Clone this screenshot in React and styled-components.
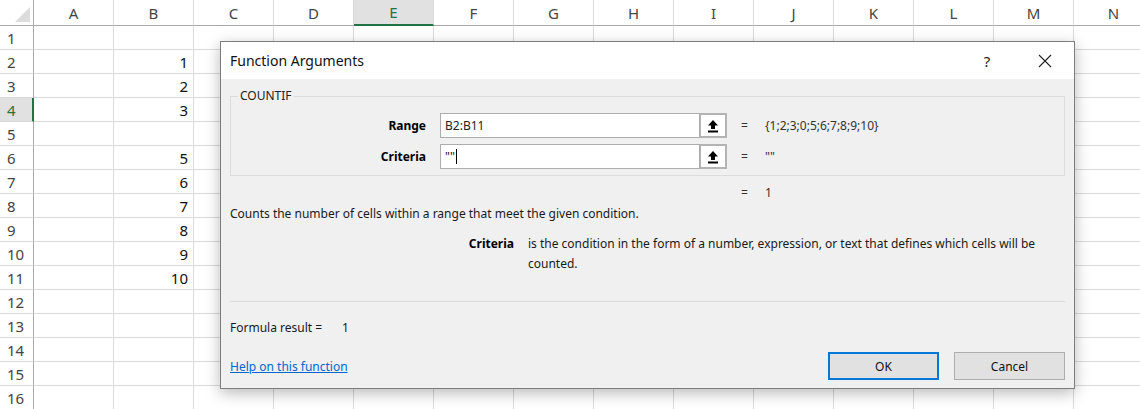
import React from 'react';
import styled, { createGlobalStyle, css } from 'styled-components';

const GlobalStyle = createGlobalStyle`
  html, body {
    margin: 0;
    padding: 0;
    background: #fff;
    overflow: hidden;
  }
  body {
    font-family: "Noto Sans", "Open Sans", sans-serif;
  }
`;

const Page = styled.div`
  position: relative;
  width: 1140px;
  height: 409px;
  overflow: hidden;
`;

const Sheet = styled.div`
  display: grid;
  grid-template-columns: 34px repeat(14, 80px);
  grid-template-rows: 26px repeat(16, 24px);
  font-family: "Noto Sans", "Open Sans", sans-serif;
  font-size: 15px;
`;

const Corner = styled.div`
  background: #fff;
  border-right: 1px solid #a9a9a9;
  border-bottom: 1px solid #a9a9a9;
  display: flex;
  align-items: flex-end;
  justify-content: flex-end;
  padding: 0 3px 3px 0;
`;

const ColHead = styled.div`
  box-sizing: border-box;
  background: #fff;
  color: #444;
  border-right: 1px solid #dadada;
  border-bottom: 1px solid #a9a9a9;
  display: flex;
  align-items: center;
  justify-content: center;
  ${props =>
    props.$selected &&
    css`
      background: #e1e1e1;
      color: #217346;
      border-bottom: 2px solid #217346;
    `}
`;

const RowHead = styled.div`
  box-sizing: border-box;
  background: #fff;
  color: #444;
  border-right: 1px solid #a9a9a9;
  border-bottom: 1px solid #dadada;
  display: flex;
  align-items: center;
  padding-left: 7px;
  ${props =>
    props.$selected &&
    css`
      background: #e1e1e1;
      color: #217346;
      border-right: 2px solid #217346;
    `}
`;

const Cell = styled.div`
  box-sizing: border-box;
  border-right: 1px solid #dadada;
  border-bottom: 1px solid #dadada;
  display: flex;
  align-items: center;
  justify-content: flex-end;
  padding-right: 5px;
  color: #111;
`;

const Dialog = styled.div`
  position: absolute;
  left: 220px;
  top: 41px;
  width: 855px;
  height: 348px;
  box-sizing: border-box;
  border: 1px solid #7d7d7d;
  background: #f0f0f0;
  box-shadow: 0 4px 14px rgba(0, 0, 0, 0.28);
  display: flex;
  flex-direction: column;
  font-family: "Noto Sans", "Open Sans", sans-serif;
  font-size: 12px;
  color: #000;
`;

const TitleBar = styled.div`
  height: 37px;
  background: #fff;
  display: flex;
  align-items: center;
  padding-left: 9px;
  font-size: 14px;
  color: #111;
`;

const TitleText = styled.div`
  flex: 1;
`;

const TitleButton = styled.div`
  width: 58px;
  display: flex;
  justify-content: center;
  align-items: center;
  font-size: 15px;
  color: #222;
`;

const Body = styled.div`
  padding: 0 9px;
  display: flex;
  flex-direction: column;
`;

const Group = styled.fieldset`
  margin: 9px 0 0;
  padding: 0 0 6px;
  border: 1px solid #dcdcdc;
  min-width: 0;
`;

const Legend = styled.legend`
  margin-left: 7px;
  padding: 0 2px;
  line-height: 16px;
  font-size: 12px;
  color: #222;
`;

const ArgRows = styled.div`
  padding-top: 9px;
  display: flex;
  flex-direction: column;
  gap: 6px;
`;

const ArgRow = styled.div`
  display: flex;
  align-items: center;
  height: 25px;
`;

const ArgLabel = styled.div`
  width: 195px;
  text-align: right;
  font-weight: bold;
  margin-right: 14px;
`;

const InputBox = styled.div`
  width: 260px;
  height: 25px;
  box-sizing: border-box;
  background: #fff;
  border: 1px solid #adadad;
  display: flex;
  align-items: center;
  padding-left: 4px;
  color: #222;
`;

const Caret = styled.span`
  display: inline-block;
  width: 1px;
  height: 15px;
  background: #000;
  margin-left: 1px;
`;

const PickButton = styled.div`
  width: 27px;
  height: 25px;
  box-sizing: border-box;
  border: 2px solid #b4b4b4;
  border-left-width: 1px;
  background: #fff;
  display: flex;
  align-items: center;
  justify-content: center;
`;

const Eq = styled.span`
  width: 24px;
  margin-left: ${props => (props.$flush ? '0' : '14px')};
  color: #333;
`;

const Value = styled.span`
  color: #333;
`;

const ResultLine = styled.div`
  margin-top: 9px;
  line-height: 16px;
  display: flex;
  padding-left: 511px;
`;

const Description = styled.div`
  margin-top: 5px;
  line-height: 16px;
  color: #1a1a1a;
`;

const ArgHelp = styled.div`
  margin-top: 12px;
  display: flex;
  line-height: 20px;
`;

const HelpLabel = styled.div`
  width: 284px;
  text-align: right;
  font-weight: bold;
  margin-right: 14px;
  flex-shrink: 0;
`;

const HelpText = styled.div`
  width: 537px;
  color: #1a1a1a;
`;

const Separator = styled.div`
  margin-top: 27px;
  height: 1px;
  background: #dcdcdc;
`;

const FormulaResult = styled.div`
  margin-top: 18px;
  line-height: 16px;
  color: #1a1a1a;
  display: flex;
  gap: 20px;
`;

const Footer = styled.div`
  margin-top: 16px;
  display: flex;
  align-items: center;
`;

const HelpLink = styled.a`
  flex: 1;
  color: #0066cc;
  text-decoration: underline;
  cursor: pointer;
`;

const Button = styled.button`
  width: 111px;
  height: 28px;
  box-sizing: border-box;
  margin-left: 15px;
  background: #e1e1e1;
  border: 1px solid #adadad;
  font-family: inherit;
  font-size: 12px;
  color: #111;
  ${props =>
    props.$default &&
    css`
      margin-left: 0;
      border: 2px solid #0078d7;
    `}
`;

const UploadIcon = () => (
  <svg width="12" height="14" viewBox="0 0 12 14">
    <path d="M6 1 L11 6.5 H8 V10 H4 V6.5 H1 Z" fill="#000" />
    <rect x="1" y="11.5" width="10" height="2" fill="#000" />
  </svg>
);

const CloseIcon = () => (
  <svg width="14" height="14" viewBox="0 0 14 14">
    <path d="M1 1 L13 13 M13 1 L1 13" stroke="#222" strokeWidth="1.1" />
  </svg>
);

const CornerTriangle = () => (
  <svg width="15" height="15" viewBox="0 0 15 15">
    <path d="M15 0 V15 H0 Z" fill="#dcdcdc" />
  </svg>
);

const columns = 'ABCDEFGHIJKLMN'.split('');
const values = { 2: 1, 3: 2, 4: 3, 6: 5, 7: 6, 8: 7, 9: 8, 10: 9, 11: 10 };
const rows = Array.from({ length: 16 }, (_, i) => i + 1);

const App = () => {
  return (
    <Page>
      <GlobalStyle />
      <Sheet>
        <Corner>
          <CornerTriangle />
        </Corner>
        {columns.map(c => (
          <ColHead key={c} $selected={c === 'E'}>
            {c}
          </ColHead>
        ))}
        {rows.map(r => (
          <React.Fragment key={r}>
            <RowHead $selected={r === 4}>{r}</RowHead>
            {columns.map(c => (
              <Cell key={c}>{c === 'B' ? values[r] : null}</Cell>
            ))}
          </React.Fragment>
        ))}
      </Sheet>

      <Dialog>
        <TitleBar>
          <TitleText>Function Arguments</TitleText>
          <TitleButton>?</TitleButton>
          <TitleButton>
            <CloseIcon />
          </TitleButton>
        </TitleBar>
        <Body>
          <Group>
            <Legend>COUNTIF</Legend>
            <ArgRows>
              <ArgRow>
                <ArgLabel>Range</ArgLabel>
                <InputBox>B2:B11</InputBox>
                <PickButton>
                  <UploadIcon />
                </PickButton>
                <Eq>=</Eq>
                <Value>{'{1;2;3;0;5;6;7;8;9;10}'}</Value>
              </ArgRow>
              <ArgRow>
                <ArgLabel>Criteria</ArgLabel>
                <InputBox>
                  ""
                  <Caret />
                </InputBox>
                <PickButton>
                  <UploadIcon />
                </PickButton>
                <Eq>=</Eq>
                <Value>""</Value>
              </ArgRow>
            </ArgRows>
          </Group>
          <ResultLine>
            <Eq $flush>=</Eq>
            <Value>1</Value>
          </ResultLine>
          <Description>
            Counts the number of cells within a range that meet the given condition.
          </Description>
          <ArgHelp>
            <HelpLabel>Criteria</HelpLabel>
            <HelpText>
              is the condition in the form of a number, expression, or text that defines which cells will be counted.
            </HelpText>
          </ArgHelp>
          <Separator />
          <FormulaResult>
            <span>Formula result =</span>
            <span>1</span>
          </FormulaResult>
          <Footer>
            <HelpLink>Help on this function</HelpLink>
            <Button $default>OK</Button>
            <Button>Cancel</Button>
          </Footer>
        </Body>
      </Dialog>
    </Page>
  );
};

export default App;
